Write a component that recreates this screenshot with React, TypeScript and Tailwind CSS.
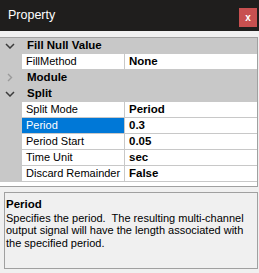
import React from 'react';

type Row =
  | { kind: 'group'; label: string; open: boolean }
  | { kind: 'prop'; name: string; value: string; selected?: boolean };

const rows: Row[] = [
  { kind: 'group', label: 'Fill Null Value', open: true },
  { kind: 'prop', name: 'FillMethod', value: 'None' },
  { kind: 'group', label: 'Module', open: false },
  { kind: 'group', label: 'Split', open: true },
  { kind: 'prop', name: 'Split Mode', value: 'Period' },
  { kind: 'prop', name: 'Period', value: '0.3', selected: true },
  { kind: 'prop', name: 'Period Start', value: '0.05' },
  { kind: 'prop', name: 'Time Unit', value: 'sec' },
  { kind: 'prop', name: 'Discard Remainder', value: 'False' },
];

function Chevron({ open }: { open: boolean }) {
  if (open) {
    return (
      <svg width="10" height="6" viewBox="0 0 10 6" className="ml-[5px]">
        <polyline points="1,1 5,5 9,1" fill="none" stroke="#3c3c3c" strokeWidth="1.5" />
      </svg>
    );
  }
  return (
    <svg width="6" height="9" viewBox="0 0 6 9" className="ml-[7px]">
      <polyline points="1,1 4.5,4.5 1,8" fill="none" stroke="#9a9a9a" strokeWidth="1.4" />
    </svg>
  );
}

export default function App() {
  return (
    <div
      className="w-[259px] h-[273px] bg-[#f0f0f0] flex flex-col overflow-hidden"
      style={{ fontFamily: '"Liberation Sans", Arial, sans-serif' }}
    >
      {/* title bar */}
      <div className="h-[31px] bg-[#1f1e1d] flex justify-between">
        <span className="pl-[8px] pt-[7px] text-[12.5px] text-white leading-[16px]">Property</span>
        <button className="mt-[8px] mr-[2px] w-[18px] h-[19px] bg-[#c85050] text-white text-[10px] font-bold leading-[19px] flex items-center justify-center">
          x
        </button>
      </div>

      {/* property grid */}
      <div className="mt-[6px] mr-[1px] h-[150px] bg-white border-y border-r border-[#a0a0a0] flex flex-col">
        {rows.map((row, i) =>
          row.kind === 'group' ? (
            <div key={i} className="h-[16px] bg-[#c8c8c8] flex items-center border-b border-[#c8c8c8]">
              <div className="w-[22px] flex items-center">
                <Chevron open={row.open} />
              </div>
              <span className="pl-[5px] text-[11.5px] font-bold text-black leading-[15px]">{row.label}</span>
            </div>
          ) : (
            <div key={i} className="h-[16px] flex">
              <div className="w-[22px] bg-[#c8c8c8]" />
              <div
                className={
                  'w-[103px] border-r border-b border-[#c8c8c8] pl-[4px] text-[11px] leading-[15px] ' +
                  (row.selected ? 'bg-[#0078d7] text-white' : 'text-black')
                }
              >
                {row.name}
              </div>
              <div className="flex-1 border-b border-[#c8c8c8] pl-[4px] text-[11.5px] font-bold leading-[15px] text-black">
                {row.value}
              </div>
            </div>
          )
        )}
      </div>

      {/* description */}
      <div className="mt-[5px] ml-[4px] mr-[1px] h-[77px] border border-[#a0a0a0] bg-[#f0f0f0] pl-[1px] pt-[5px] text-[11px] leading-[12.5px] text-black">
        <div className="font-bold text-[11.5px]">Period</div>
        <div className="mt-[1px] whitespace-pre">
          {'Specifies the period.  The resulting multi-channel\noutput signal will have the length associated with\nthe specified period.'}
        </div>
      </div>
    </div>
  );
}
